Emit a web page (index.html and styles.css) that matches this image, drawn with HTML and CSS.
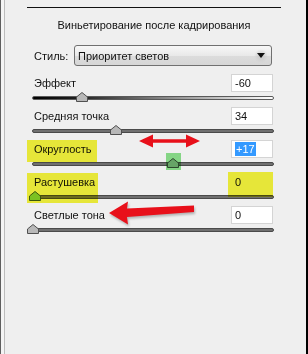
FILE: index.html
```html
<!DOCTYPE html>
<html lang="ru">
<head>
<meta charset="utf-8">
<link rel="stylesheet" href="styles.css">
</head>
<body>
<div class="window">
  <div class="gutter"></div>
  <div class="content">
    <div class="panel">
      <div class="title">Виньетирование после кадрирования</div>
      <div class="style-row">
        <span class="style-label">Стиль:</span>
        <div class="select">
          <span class="select-text">Приоритет светов</span>
          <span class="select-btn"><svg width="8" height="5" viewBox="0 0 8 5"><path d="M0 0H8L4 5Z" fill="#111"/></svg></span>
        </div>
      </div>

      <div class="group">
        <div class="row"><span class="label">Эффект</span><div class="field">-60</div></div>
        <div class="track track-grad"><svg class="thumb" style="left:43px" width="12" height="10" viewBox="0 0 12 10"><path d="M6 0.5L11.5 5V9.5H0.5V5Z" class="thumb-shape"/></svg></div>
      </div>

      <div class="group">
        <div class="row"><span class="label">Средняя точка</span><div class="field">34</div></div>
        <div class="track"><svg class="thumb" style="left:77px" width="12" height="10" viewBox="0 0 12 10"><path d="M6 0.5L11.5 5V9.5H0.5V5Z" class="thumb-shape"/></svg></div>
      </div>

      <div class="group">
        <div class="row"><span class="label">Округлость</span><div class="field"><span class="selected">+17</span></div></div>
        <div class="track"><svg class="thumb" style="left:134px" width="12" height="10" viewBox="0 0 12 10"><path d="M6 0.5L11.5 5V9.5H0.5V5Z" class="thumb-shape"/></svg></div>
      </div>

      <div class="group">
        <div class="row"><span class="label">Растушевка</span><div class="field field-clear">0</div></div>
        <div class="track"><svg class="thumb" style="left:-4px" width="12" height="10" viewBox="0 0 12 10"><path d="M6 0.5L11.5 5V9.5H0.5V5Z" class="thumb-shape thumb-green"/></svg></div>
      </div>

      <div class="group">
        <div class="row"><span class="label">Светлые тона</span><div class="field">0</div></div>
        <div class="track"><svg class="thumb" style="left:-6px" width="12" height="10" viewBox="0 0 12 10"><path d="M6 0.5L11.5 5V9.5H0.5V5Z" class="thumb-shape"/></svg></div>
      </div>
    </div>
  </div>

  <div class="hl hl-yellow hl-round"></div>
  <div class="hl hl-yellow hl-feather"></div>
  <div class="hl hl-yellow hl-field"></div>
  <div class="hl hl-green hl-thumb"></div>

  <svg class="arrow arrow-double" width="66" height="16" viewBox="0 0 66 16">
    <path d="M2 8L16 1.5V6.2H49V1.5L63 8L49 14.5V9.8H16V14.5Z" fill="#e8101a"/>
  </svg>
  <svg class="arrow arrow-left" width="92" height="28" viewBox="0 0 92 28">
    <path d="M2 13L21 1.5L20 8.5L87 5.5V12L20 17L21 24.5Z" fill="#e8101a"/>
  </svg>
</div>
</body>
</html>
```
FILE: styles.css
```css
* { box-sizing: border-box; }
html, body { margin: 0; padding: 0; background: #efefef; }
body {
  font-family: "Liberation Sans", Arial, sans-serif;
  font-size: 11px;
  color: #111;
}
.window {
  position: relative;
  width: 308px;
  height: 354px;
  display: flex;
  background: #efefef;
  border-left: 1px solid #5e5e5e;
  border-right: 2px solid #000;
  overflow: hidden;
}
.gutter { width: 3px; background: #f4f4f4; }
.content {
  border-left: 1px solid #bcbcbc;
  padding: 7px 0 0 22px;
  flex: 1;
}
.panel {
  width: 254px;
  border-top: 1px solid #111;
}
.title {
  margin-top: 10px;
  height: 14px;
  line-height: 14px;
  text-align: center;
}
.style-row {
  margin-top: 13px;
  display: flex;
  align-items: center;
  padding: 0 9px 0 7px;
}
.style-label { width: 40px; }
.select {
  flex: 1;
  height: 21px;
  border: 1px solid #707070;
  border-radius: 3px;
  background: linear-gradient(#f7f7f7, #e9e9e9 50%, #dcdcdc 51%, #d6d6d6);
  display: flex;
  align-items: center;
  padding-left: 3px;
}
.select-text { flex: 1; }
.select-btn {
  width: 14px;
  height: 14px;
  margin-right: 3px;
  border-radius: 50%;
  background: radial-gradient(circle, #c8c8c8 0%, rgba(210,210,210,0) 70%);
  display: flex;
  align-items: center;
  justify-content: center;
}
.group {
  margin-top: 8px;
  padding: 0 7px 0 5px;
}
.group + .group { margin-top: 7px; }
.row {
  display: flex;
  justify-content: space-between;
  align-items: center;
  height: 18px;
}
.label { padding-left: 2px; }
.field {
  width: 42px;
  height: 18px;
  margin-right: 1px;
  border: 1px solid #d4d4d4;
  background: #fff;
  padding-left: 3px;
  line-height: 16px;
}
.field-clear { background: transparent; border-color: transparent; }
.selected { background: #3399ff; color: #fff; padding: 1px 1px; }
.track {
  position: relative;
  margin-top: 4px;
  height: 4px;
  border-radius: 2px;
  background: #707070;
  border: 1px solid #4a4a4a;
}
.track-grad {
  background: linear-gradient(90deg, #000 0%, #222 20%, #888 55%, #fff 100%);
  border-color: #5a5a5a;
}
.thumb {
  position: absolute;
  top: -5px;
}
.thumb-shape {
  fill: #b8b8b8;
  stroke: #505050;
  stroke-width: 1;
}
.thumb-green { fill: #80c890; stroke: #3c5a2c; }
.hl { position: absolute; mix-blend-mode: multiply; }
.hl-yellow { background: #f6f63c; }
.hl-green { background: #8ee48e; }
.hl-round { left: 26px; top: 140px; width: 70px; height: 22px; }
.hl-feather { left: 26px; top: 173px; width: 71px; height: 30px; }
.hl-field { left: 227px; top: 172px; width: 45px; height: 25px; }
.hl-thumb { left: 165px; top: 153px; width: 15px; height: 17px; }
.arrow { position: absolute; }
.arrow-double { left: 136px; top: 133px; }
.arrow-left { left: 106px; top: 200px; filter: drop-shadow(1px 2px 1px rgba(0,0,0,0.25)); }
```
